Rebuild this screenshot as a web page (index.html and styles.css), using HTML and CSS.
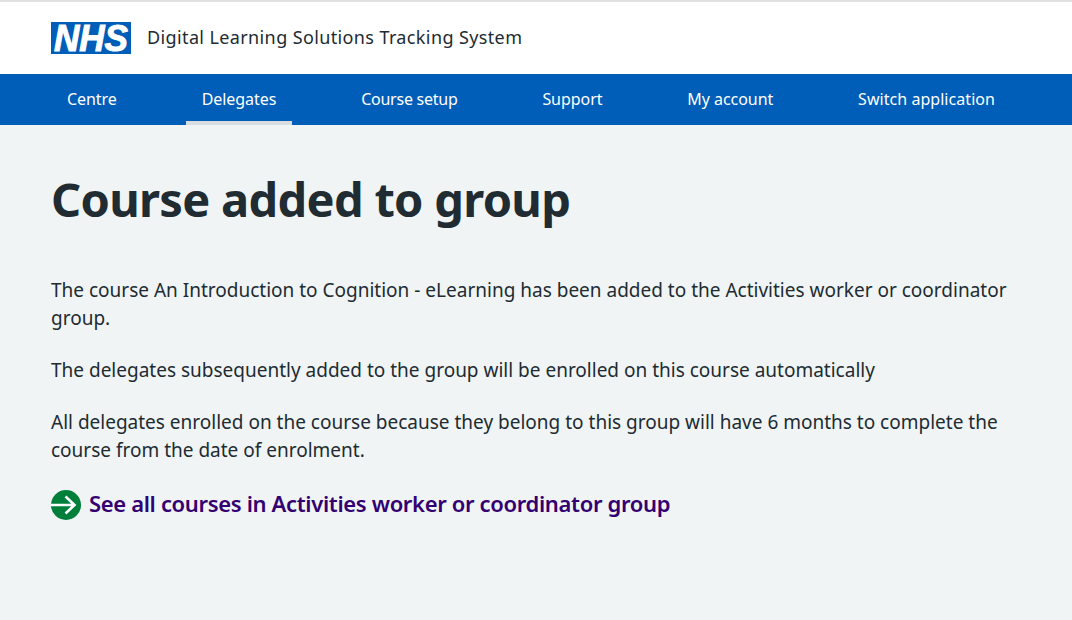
FILE: index.html
```html
<!DOCTYPE html>
<html lang="en">
<head>
<meta charset="utf-8">
<title>Course added to group</title>
<link rel="stylesheet" href="styles.css">
</head>
<body>
<header class="site-header">
  <div class="container header-row">
    <a class="logo" href="#"><svg class="logo-svg" width="80" height="32" viewBox="0 0 80 32"><rect width="80" height="32" fill="#005eb8"/><text class="logo-text" x="40" y="29" text-anchor="middle" textLength="74" lengthAdjust="spacingAndGlyphs">NHS</text></svg></a>
    <span class="service-name">Digital Learning Solutions Tracking System</span>
  </div>
</header>
<nav class="site-nav">
  <ul class="container nav-list">
    <li><a class="nav-link" href="#">Centre</a></li>
    <li><a class="nav-link active" href="#">Delegates</a></li>
    <li><a class="nav-link tight" href="#">Course setup</a></li>
    <li><a class="nav-link" href="#">Support</a></li>
    <li><a class="nav-link" href="#">My account</a></li>
    <li><a class="nav-link loose" href="#">Switch application</a></li>
  </ul>
</nav>
<main class="container main">
  <h1 class="title">Course added to group</h1>
  <p class="body-text">The course An Introduction to Cognition - eLearning has been added to the Activities worker or coordinator group.</p>
  <p class="body-text">The delegates subsequently added to the group will be enrolled on this course automatically</p>
  <p class="body-text last">All delegates enrolled on the course because they belong to this group will have 6 months to complete the course from the date of enrolment.</p>
  <a class="action-link" href="#">
    <svg class="action-icon" width="30" height="30" viewBox="0 0 30 30"><circle cx="15" cy="15" r="15" fill="#007f3b"/><path d="M0 15H23M14.5 6.5L23.5 15L14.5 23.5" fill="none" stroke="#fff" stroke-width="2.6"/></svg>
    <span class="action-text">See all courses in Activities worker or coordinator group</span>
  </a>
</main>
</body>
</html>
```
FILE: styles.css
```css
* { box-sizing: border-box; }
html, body { margin: 0; padding: 0; }
body {
  height: 620px;
  overflow: hidden;
  background: #f0f4f5;
  color: #212b32;
  font-family: "Noto Sans", sans-serif;
}
.container { width: 960px; margin-left: 51px; }
.site-header {
  background: #fff;
  border-top: 2px solid #e0e0e0;
  height: 74px;
}
.header-row { display: flex; align-items: center; padding-top: 20px; }
.logo { display: block; height: 32px; }
.logo-svg { display: block; overflow: visible; }
.logo-text { font: italic 700 36px/32px "Liberation Sans", sans-serif; fill: #fff; stroke: #fff; stroke-width: 1; }
.service-name { margin-left: 16px; padding-bottom: 2px; font-size: 18px; line-height: 26px; letter-spacing: 0.38px; }
.site-nav { background: #005eb8; height: 51px; }
.nav-list {
  display: flex;
  justify-content: space-between;
  list-style: none;
  padding: 0;
  margin-top: 0;
  margin-bottom: 0;
}
.nav-link {
  display: block;
  height: 51px;
  padding: 12px 16px 0;
  color: #fff;
  font-size: 16px;
  line-height: 26px;
  letter-spacing: -0.05px;
  text-decoration: none;
}
.nav-link.tight { letter-spacing: -0.25px; }
.nav-link.loose { letter-spacing: 0.05px; }
.nav-link.active { border-bottom: 4px solid #d8dde0; }
.main { padding-top: 40px; }
.title {
  margin: 0 0 43px;
  font-size: 47px;
  line-height: 68px;
  font-weight: 700;
  letter-spacing: -0.7px;
}
.body-text { margin: 0 0 24px; font-size: 19px; line-height: 28px; }
.body-text.last { margin-bottom: 26px; }
.action-link {
  display: flex;
  align-items: center;
  gap: 8px;
  color: #330072;
  font-size: 22px;
  font-weight: 600;
  line-height: 26px;
  letter-spacing: -0.34px;
  text-decoration: none;
}
.action-text { padding-bottom: 4px; }
.action-icon { flex: none; }
```
